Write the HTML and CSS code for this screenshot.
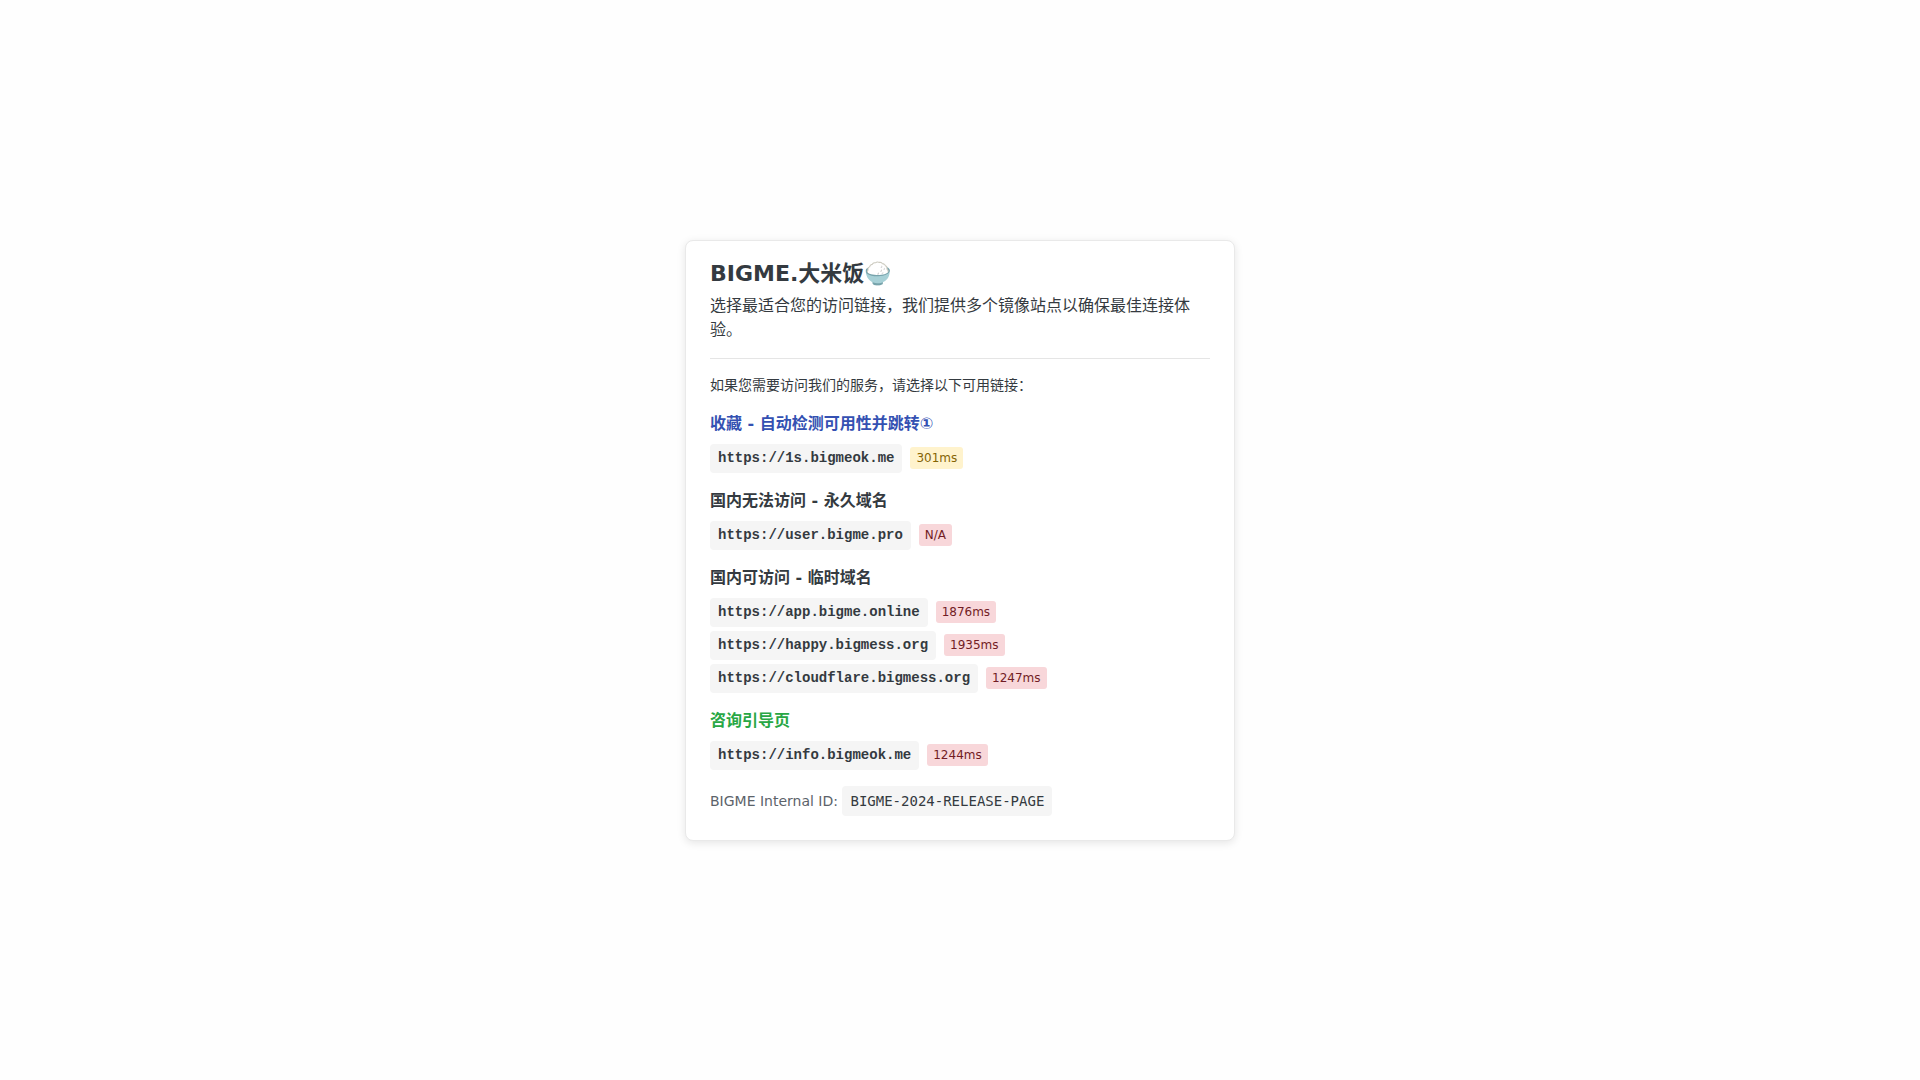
FILE: index.html
```
<!DOCTYPE html>
<html lang="zh-CN">
<head>
    <meta charset="UTF-8">
    <meta name="viewport" content="width=device-width, initial-scale=1.0">
    <title>BIGME.大米饭</title>
    <link rel="stylesheet" href="styles.css">
</head>
<body>
    <main class="card">
        <header class="card-header">
            <h1>BIGME.大米饭🍚</h1>
            <p>选择最适合您的访问链接，我们提供多个镜像站点以确保最佳连接体验。</p>
        </header>

        <p class="intro">如果您需要访问我们的服务，请选择以下可用链接：</p>

        <section class="link-group">
            <h2 class="title-primary">收藏 - 自动检测可用性并跳转①</h2>
            <ul>
                <li><a class="link" href="https://1s.bigmeok.me">https://1s.bigmeok.me</a><span class="latency medium">301ms</span></li>
            </ul>
        </section>

        <section class="link-group">
            <h2>国内无法访问 - 永久域名</h2>
            <ul>
                <li><a class="link" href="https://user.bigme.pro">https://user.bigme.pro</a><span class="latency slow">N/A</span></li>
            </ul>
        </section>

        <section class="link-group">
            <h2>国内可访问 - 临时域名</h2>
            <ul>
                <li><a class="link" href="https://app.bigme.online">https://app.bigme.online</a><span class="latency slow">1876ms</span></li>
                <li><a class="link" href="https://happy.bigmess.org">https://happy.bigmess.org</a><span class="latency slow">1935ms</span></li>
                <li><a class="link" href="https://cloudflare.bigmess.org">https://cloudflare.bigmess.org</a><span class="latency slow">1247ms</span></li>
            </ul>
        </section>

        <section class="link-group">
            <h2 class="title-success">咨询引导页</h2>
            <ul>
                <li><a class="link" href="https://info.bigmeok.me">https://info.bigmeok.me</a><span class="latency slow">1244ms</span></li>
            </ul>
        </section>

        <footer class="card-footer">BIGME Internal ID: <code>BIGME-2024-RELEASE-PAGE</code></footer>
    </main>
</body>
</html>
```
FILE: styles.css
```
* {
    box-sizing: border-box;
    margin: 0;
    padding: 0;
}

body {
    min-height: 100vh;
    display: flex;
    justify-content: center;
    align-items: center;
    font-family: "DejaVu Sans", "Noto Sans CJK SC", "Noto Color Emoji", sans-serif;
    font-size: 16px;
    line-height: 24px;
    color: #343a40;
    background-color: #fefefe;
}

.card {
    width: 100%;
    max-width: 550px;
    padding: 16px 24px 24px;
    background-color: #fff;
    border: 1px solid #e9e9e9;
    border-radius: 8px;
    box-shadow: 0 2px 8px rgba(0, 0, 0, 0.1);
}

.card-header {
    padding-bottom: 16px;
    margin-bottom: 16px;
    border-bottom: 1px solid #e5e5e5;
}
.card-header h1 {
    margin-bottom: 4px;
    font-size: 22px;
    line-height: 33px;
}

.intro {
    margin-bottom: 16px;
    font-size: 14px;
    line-height: 21px;
}

/* Link groups */
.link-group {
    margin-bottom: 16px;
}
.link-group h2 {
    margin-bottom: 8px;
    font-size: 16px;
}
.title-primary { color: #3451b2; }
.title-success { color: #28a745; }

.link-group ul {
    display: grid;
    gap: 4px;
    list-style: none;
}
.link-group li {
    display: flex;
    align-items: center;
    gap: 8px;
}

.link {
    padding: 4px 8px;
    border-radius: 4px;
    background-color: #f5f5f5;
    color: inherit;
    font-family: "Liberation Mono", monospace;
    font-size: 14px;
    font-weight: bold;
    line-height: 21px;
    text-decoration: none;
}
.link:hover {
    background-color: #e9ecef;
}

.latency {
    padding: 2px 6px;
    border-radius: 3px;
    font-size: 12px;
    line-height: 18px;
}
.medium {
    background-color: #fff3cd;
    color: #856404;
}
.slow {
    background-color: #f8d7da;
    color: #721c24;
}

.card-footer {
    font-size: 14px;
    color: #5c636a;
}
.card-footer code {
    display: inline-block;
    padding: 4px 8px;
    border-radius: 4px;
    background-color: #f5f5f5;
    color: #343a40;
    font-family: "DejaVu Sans Mono", monospace;
    font-size: 14px;
    line-height: 22px;
}
```
